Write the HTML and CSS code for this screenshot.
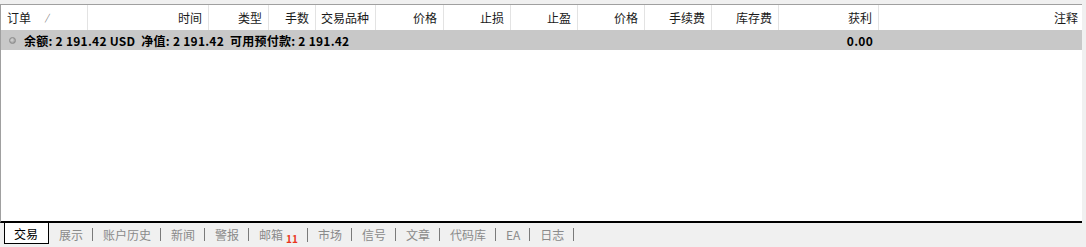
FILE: index.html
```html
<!DOCTYPE html>
<html>
<head>
  <title>Toolbox</title>
  <link rel="stylesheet" href="styles.css">
</head>
<body>
  <div class="terminal">
    <div class="grid-panel">
      <div class="grid-row grid-head">
        <div class="cell cell-left">订单 <span class="sort-mark">/</span></div>
        <div class="cell">时间</div>
        <div class="cell">类型</div>
        <div class="cell">手数</div>
        <div class="cell">交易品种</div>
        <div class="cell">价格</div>
        <div class="cell">止损</div>
        <div class="cell">止盈</div>
        <div class="cell">价格</div>
        <div class="cell">手续费</div>
        <div class="cell">库存费</div>
        <div class="cell">获利</div>
        <div class="cell">注释</div>
      </div>
      <div class="grid-row summary">
        <div class="summary-text">
          <span class="dot"></span>
          <span>余额: 2 191.42 USD&nbsp; 净值: 2 191.42&nbsp; 可用预付款: 2 191.42</span>
        </div>
        <div class="cell profit">0.00</div>
      </div>
    </div>

    <div class="tab-bar">
      <div class="tab active">交易</div>
      <div class="tab">展示</div>
      <div class="tab">账户历史</div>
      <div class="tab">新闻</div>
      <div class="tab">警报</div>
      <div class="tab">邮箱<span class="count">11</span></div>
      <div class="tab">市场</div>
      <div class="tab">信号</div>
      <div class="tab">文章</div>
      <div class="tab">代码库</div>
      <div class="tab">EA</div>
      <div class="tab">日志</div>
    </div>
  </div>
</body>
</html>
```

FILE: styles.css
```css
body {
  margin: 0;
  background-color: #f0f0f0;
  font-family: "Noto Sans CJK SC", "Noto Sans", sans-serif;
  font-size: 12px;
  color: #1a1a1a;
}

.terminal {
  height: 247px;
  display: flex;
  flex-direction: column;
  padding-top: 4px;
  box-sizing: border-box;
}

/* table area */
.grid-panel {
  flex: 1;
  margin-right: 4px;
  background-color: #fff;
  border-top: 1px solid #a0a0a0;
  border-left: 1px solid #a0a0a0;
  border-bottom: 2px solid #000;
}

.grid-row {
  display: grid;
  grid-template-columns: 87px 121px 60px 47px 60px 68px 67px 67px 67px 67px 67px 100px 1fr;
}

.grid-head {
  height: 25px;
}

.cell {
  display: flex;
  align-items: center;
  justify-content: flex-end;
  padding-right: 6px;
  white-space: nowrap;
}

.grid-head .cell {
  border-right: 1px solid #e3e3e3;
}

.grid-head .cell:last-child {
  border-right: none;
  padding-right: 4px;
}

.cell-left {
  justify-content: flex-start;
  padding-left: 6px;
}

.sort-mark {
  margin-left: 14px;
  font-size: 9px;
  color: #777;
  font-style: italic;
}

.summary {
  height: 20px;
  background-color: #c8c8c8;
  font-weight: bold;
  color: #000;
}

.summary-text {
  grid-column: 1 / 12;
  display: flex;
  align-items: center;
  white-space: nowrap;
  padding-left: 8px;
  letter-spacing: 0.25px;
}

.dot {
  width: 7px;
  height: 7px;
  border-radius: 50%;
  background: radial-gradient(circle at 40% 40%, #d8d8d8, #8a8a8a);
  border: 1px solid #8c8c8c;
  box-sizing: border-box;
  margin-right: 8px;
}

.profit {
  grid-column: 12;
  letter-spacing: 0.25px;
}

/* bottom tabs */
.tab-bar {
  height: 24px;
  display: flex;
  align-items: flex-start;
  padding-left: 4px;
}

.tab {
  margin-top: 5px;
  padding: 0 9px 0 10px;
  line-height: 13px;
  border-right: 1px solid #7a7a7a;
  color: #8a8a8a;
  white-space: nowrap;
}

.tab.active {
  margin-top: 0;
  padding: 3px 10px 2px 9px;
  line-height: 15px;
  background-color: #fff;
  color: #000;
  border: 1px solid #000;
  border-top: none;
}

.count {
  color: #e8341c;
  font-weight: bold;
  font-size: 10px;
  margin-left: 3px;
  position: relative;
  top: 3px;
}
```
